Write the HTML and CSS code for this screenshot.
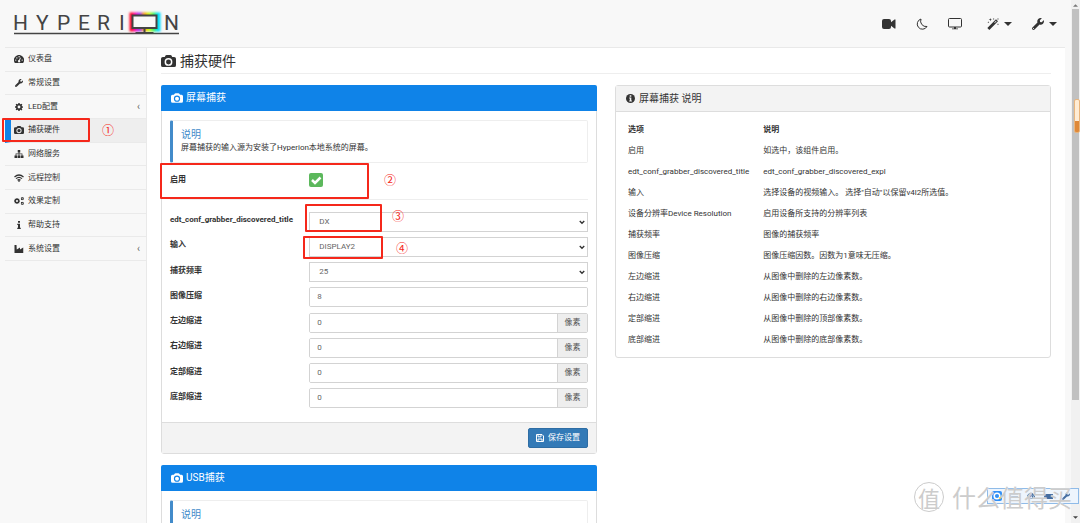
FILE: index.html
```html
<!DOCTYPE html>
<html lang="zh-CN">
<head>
<meta charset="utf-8">
<title>Hyperion</title>
<link rel="stylesheet" href="styles.css">
</head>
<body>
<svg class="defs" aria-hidden="true">
  <defs>
    <linearGradient id="rainbow"><stop offset="0" stop-color="#f02"/><stop offset=".12" stop-color="#f0a"/><stop offset=".3" stop-color="#83f"/><stop offset=".45" stop-color="#f80"/><stop offset=".65" stop-color="#cf0"/><stop offset=".85" stop-color="#2e6"/><stop offset="1" stop-color="#0df"/></linearGradient>
    <filter id="glow" x="-30%" y="-30%" width="160%" height="160%"><feGaussianBlur stdDeviation="1"/></filter>
  </defs>
  <symbol id="camera" viewBox="0 0 20 16"><path fill-rule="evenodd" d="M2.500 2.500H5L6 .8Q6.500 0 7.500 0h5Q13.500 0 14 .8l1 1.700h2.500Q20 2.500 20 5v8.500Q20 16 17.500 16h-15Q0 16 0 13.500V5Q0 2.500 2.500 2.500zM10 4a5.200 5.200 0 1 0 0 10.400A5.200 5.200 0 1 0 10 4zm0 1.900a3.300 3.300 0 1 1 0 6.600 3.300 3.300 0 1 1 0-6.600z"/></symbol>
  <symbol id="wrench" viewBox="0 0 512 512"><path d="M507.730 109.100c-2.240-9.030-13.540-12.090-20.120-5.510l-74.360 74.360-67.880-11.310-11.310-67.880 74.360-74.360c6.620-6.620 3.430-17.900-5.660-20.160-47.380-11.740-99.550.91-136.580 37.930-39.640 39.640-50.550 97.100-34.050 147.200L18.740 402.760c-24.990 24.990-24.990 65.510 0 90.500 24.990 24.990 65.510 24.990 90.500 0l213.210-213.210c50.120 16.710 107.470 5.680 147.370-34.220 37.070-37.070 49.700-89.320 37.910-136.730zM64 472c-13.250 0-24-10.750-24-24 0-13.260 10.750-24 24-24s24 10.740 24 24c0 13.250-10.750 24-24 24z"/></symbol>
  <symbol id="gauge" viewBox="0 0 18 14"><path fill-rule="evenodd" d="M1.500 14A9 9 0 1 1 16.500 14zM2 9a1.200 1.200 0 1 0 2.400 0A1.200 1.200 0 1 0 2 9zm2-4a1.200 1.200 0 1 0 2.400 0A1.200 1.200 0 1 0 4 5zm4-2a1.200 1.200 0 1 0 2.400 0A1.200 1.200 0 1 0 8 3zm5.500 6a1.200 1.200 0 1 0 2.400 0 1.200 1.200 0 1 0-2.400 0zM11 4.500 9 9a2 2 0 1 0 1.500.5l1.800-4.500z"/></symbol>
  <symbol id="gear" viewBox="0 0 16 16"><path fill-rule="evenodd" d="M6.700 0h2.600l.4 2.100 1.500.6L13 1.500 14.700 3.200l-1.300 1.700.6 1.500 2 .4v2.500l-2 .4-.6 1.500 1.300 1.800-1.800 1.800-1.800-1.300-1.400.6-.4 1.900H6.700l-.4-2-1.500-.6L3 14.700 1.300 13l1.300-1.800L2 9.700l-2-.4V6.700l2-.4.600-1.500L1.300 3 3 1.300l1.800 1.300L6.300 2zM8 5.200a2.800 2.800 0 1 0 0 5.600 2.800 2.800 0 1 0 0-5.600z"/></symbol>
  <symbol id="gears" viewBox="0 0 20 16"><svg x="0" y="2" width="12" height="12"><use href="#gear"/></svg><svg x="13" y="0" width="7" height="7"><use href="#gear"/></svg><svg x="13" y="9" width="7" height="7"><use href="#gear"/></svg></symbol>
  <symbol id="sitemap" viewBox="0 0 18 16"><path d="M6.500 0h5v5H9.800v2.200h6V11H18v5h-5.500v-5h1.800V8.700H9.800V11h1.700v5h-5v-5h1.700V8.700H3.700V11h1.800v5H0v-5h2.200V7.200h6V5H6.500z"/></symbol>
  <symbol id="wifi" viewBox="0 0 20 15"><g fill="none" stroke="currentColor" stroke-width="2.400"><path d="M1 5.500Q10-2.500 19 5.500M4 8.800q6-5.400 12 0M7 12q3-2.800 6 0"/></g><circle cx="10" cy="13.300" r="1.700"/></symbol>
  <symbol id="info" viewBox="0 0 8 16"><path d="M2 0h4v3.500H2zM.5 5.500H6v8h1.500V16h-7v-2.500H2V8H.5z"/></symbol>
  <symbol id="industry" viewBox="0 0 18 16"><path d="M0 0h4l.5 9L11 5v4l6.500-4v11H0z"/></symbol>
  <symbol id="wand" viewBox="0 0 18 18"><path fill-rule="evenodd" d="M13.500 2 16.500 5 3.500 18 .5 15zM13.500 4.200l-2.600 2.600.8.800 2.600-2.600z"/><path d="M5 0l.6 1.900 1.900.6-1.900.6L5 5l-.6-1.900-1.900-.6 1.900-.6zM10 0l.4 1.100 1.100.4-1.100.4L10 3l-.4-1.100-1.100-.4 1.100-.4zM16.500 8l.4 1.100 1.100.4-1.100.4-.4 1.100-.4-1.100-1.100-.4 1.100-.4zM16.500 0l.4 1.100 1.100.4-1.100.4-.4 1.100-.4-1.100-1.100-.4 1.100-.4zM2 5l.4 1.100 1.100.4-1.100.4L2 8l-.4-1.100L.5 6.500l1.100-.4z"/></symbol>
  <symbol id="chevron" viewBox="0 0 8 6"><path d="M1 1l3 3 3-3" fill="none" stroke="currentColor" stroke-width="1.800"/></symbol>
  <symbol id="caret" viewBox="0 0 8 4"><path d="M0 0h8L4 4z"/></symbol>
</svg>

<div class="app">
  <header class="topbar">
    <svg class="logo" viewBox="0 0 166 24" role="img" aria-label="Hyperion">
      <text class="logo-text" x="-1 22 43 64 83 105 150" y="18">HYPERIN</text>
      <path d="M0 21.500h165" stroke="#444" stroke-width="1.500"/>
      <rect x="118" y="3" width="26" height="14" fill="none" stroke="url(#rainbow)" stroke-width="5" filter="url(#glow)"/>
      <rect x="118.500" y="3.500" width="24" height="12.500" fill="#f8f8f8" stroke="#444" stroke-width="2"/>
      <path d="M129.500 16h2v4h8v1h-18v-1h8z" fill="#444"/>
    </svg>
    <nav class="tools">
      <button class="tool" aria-label="视频"><svg width="14" height="10" viewBox="0 0 14 10"><rect width="9" height="10" rx="2"/><path d="M8 4l4.500-3.500h1v9h-1L8 6z"/></svg></button>
      <button class="tool" aria-label="夜间模式"><svg width="12" height="12" viewBox="0 0 12 12"><path d="M5 1a5.200 5.200 0 1 0 6 7.500A5.500 5.500 0 0 1 5 1z" fill="none" stroke="currentColor"/></svg></button>
      <button class="tool" aria-label="显示器"><svg width="14" height="12" viewBox="0 0 14 12"><rect x=".5" y=".5" width="13" height="8.500" rx="1" fill="none" stroke="currentColor"/><path d="M6 9h2v1.500h2v.8H4v-.8h2z"/></svg></button>
      <button class="tool tool-menu first" aria-label="向导"><svg width="12" height="12"><use href="#wand"/></svg><svg width="8" height="4"><use href="#caret"/></svg></button>
      <button class="tool tool-menu" aria-label="设置"><svg width="12" height="12"><use href="#wrench"/></svg><svg width="8" height="4"><use href="#caret"/></svg></button>
    </nav>
  </header>

  <div class="body">
    <nav class="sidebar">
      <a href="#"><svg><use href="#gauge"/></svg>仪表盘</a>
      <a href="#"><svg><use href="#wrench"/></svg>常规设置</a>
      <a href="#"><svg><use href="#gear"/></svg>LED配置<span class="more">‹</span></a>
      <a href="#" class="active"><svg><use href="#camera"/></svg>捕获硬件</a>
      <a href="#"><svg><use href="#sitemap"/></svg>网络服务</a>
      <a href="#"><svg><use href="#wifi"/></svg>远程控制</a>
      <a href="#"><svg><use href="#gears"/></svg>效果定制</a>
      <a href="#"><svg><use href="#info"/></svg>帮助支持</a>
      <a href="#"><svg><use href="#industry"/></svg>系统设置<span class="more">‹</span></a>
    </nav>

    <main class="content">
      <h1><svg width="15" height="12"><use href="#camera"/></svg>捕获硬件</h1>
      <div class="columns">
        <div class="stack">
          <section class="panel">
            <h2 class="panel-head primary"><svg width="12" height="10"><use href="#camera"/></svg>屏幕捕获</h2>
            <form class="panel-body">
              <div class="callout"><h3>说明</h3><p>屏幕捕获的输入源为安装了Hyperion本地系统的屏幕。</p></div>
              <div class="row enable"><label for="enable">启用</label><input type="checkbox" id="enable" checked><svg class="tick" viewBox="0 0 14 14"><path d="M3 7l3 3 5.500-5.500" fill="none" stroke="#fff" stroke-width="2.500"/></svg></div>
              <div class="fields">
                <div class="row"><label for="dev">edt_conf_grabber_discovered_title</label><div class="select"><select id="dev"><option>DX</option></select><svg><use href="#chevron"/></svg></div></div>
                <div class="row"><label for="input">输入</label><div class="select"><select id="input"><option>DISPLAY2</option></select><svg><use href="#chevron"/></svg></div></div>
                <div class="row"><label for="fps">捕获频率</label><div class="select"><select id="fps"><option>25</option></select><svg><use href="#chevron"/></svg></div></div>
                <div class="row"><label for="dec">图像压缩</label><div class="group"><input type="text" id="dec" value="8"></div></div>
                <div class="row"><label for="left">左边缩进</label><div class="group"><input type="text" id="left" value="0"><span class="unit">像素</span></div></div>
                <div class="row"><label for="right">右边缩进</label><div class="group"><input type="text" id="right" value="0"><span class="unit">像素</span></div></div>
                <div class="row"><label for="top">定部缩进</label><div class="group"><input type="text" id="top" value="0"><span class="unit">像素</span></div></div>
                <div class="row"><label for="bottom">底部缩进</label><div class="group"><input type="text" id="bottom" value="0"><span class="unit">像素</span></div></div>
              </div>
            </form>
            <div class="panel-foot"><button class="save"><svg width="8" height="8" viewBox="0 0 8 8"><path d="M.5.5h5.500l1.500 1.500v5.500h-7zM2 .5v2.300h3V.5M2 7.500V5h4v2.500" fill="none" stroke="currentColor"/></svg>保存设置</button></div>
          </section>
          <section class="panel">
            <h2 class="panel-head primary"><svg width="12" height="10"><use href="#camera"/></svg>USB捕获</h2>
            <div class="panel-body"><div class="callout"><h3>说明</h3></div></div>
          </section>
        </div>

        <section class="panel">
          <h2 class="panel-head"><svg width="9" height="9" viewBox="0 0 9 9"><circle cx="4.500" cy="4.500" r="4.500"/><path d="M3.700 1.300h1.600v1.400H3.700zM3.200 3.500h2.100v3h.6v1H3.200v-1h.6v-2h-.6z" fill="#f3f3f3"/></svg><span>屏幕捕获 说明</span></h2>
          <div class="help">
            <table>
              <thead><tr><th class="name">选项</th><th>说明</th></tr></thead>
              <tbody>
                <tr><td>启用</td><td>如选中，该组件启用。</td></tr>
                <tr><td>edt_conf_grabber_discovered_title</td><td>edt_conf_grabber_discovered_expl</td></tr>
                <tr><td>输入</td><td>选择设备的视频输入。 选择"自动"以保留v4l2所选值。</td></tr>
                <tr><td>设备分辨率Device Resolution</td><td>启用设备所支持的分辨率列表</td></tr>
                <tr><td>捕获频率</td><td>图像的捕获频率</td></tr>
                <tr><td>图像压缩</td><td>图像压缩因数。因数为1意味无压缩。</td></tr>
                <tr><td>左边缩进</td><td>从图像中删除的左边像素数。</td></tr>
                <tr><td>右边缩进</td><td>从图像中删除的右边像素数。</td></tr>
                <tr><td>定部缩进</td><td>从图像中删除的顶部像素数。</td></tr>
                <tr><td>底部缩进</td><td>从图像中删除的底部像素数。</td></tr>
              </tbody>
            </table>
          </div>
        </section>
      </div>
    </main>
  </div>
</div>

<div class="scrollbar"><svg width="5" height="3" viewBox="0 0 8 4"><path d="M0 4h8L4 0z"/></svg><div class="thumb"></div><svg class="down" width="5" height="3"><use href="#caret"/></svg></div>
<div class="marker"></div>

<div class="mark mark-1"></div><span class="num num-1">①</span>
<div class="mark mark-2"></div><span class="num num-2">②</span>
<div class="mark mark-3"></div><span class="num num-3">③</span>
<div class="mark mark-4"></div><span class="num num-4">④</span>

<div class="ime"><svg width="10" height="10" viewBox="0 0 10 10"><rect width="10" height="10" rx="2" fill="#3290f5"/><circle cx="5" cy="5" r="2.800" fill="none" stroke="#fff" stroke-width="1.500"/><circle cx="8" cy="7" r="1" fill="#fc3"/></svg><svg width="8" height="8" viewBox="0 0 8 8"><path d="M0 2h7M0 5h7" stroke="#456da0"/></svg><svg width="8" height="8"><use href="#gauge"/></svg><svg width="10" height="8" viewBox="0 0 10 8"><path d="M0 2h9v5H0z"/></svg><svg width="8" height="8"><use href="#wrench"/></svg></div>
<div class="watermark"><span class="seal">值</span><span>什么值得买</span></div>
</body>
</html>
```

FILE: styles.css
```css
* { box-sizing: border-box; }
body {
  margin: 0;
  height: 100vh;
  overflow: hidden;
  position: relative;
  background: #f8f8f8;
  color: #333;
  font: 8px/12px Roboto, "Noto Sans CJK SC", sans-serif;
}
h1, h2, h3, p { margin: 0; font-weight: 400; }
button, input, select { font: inherit; color: inherit; }
svg { fill: currentColor; flex: none; }
.defs { position: absolute; width: 0; height: 0; }

.app { height: 100vh; display: flex; flex-direction: column; margin: 0 15px 0 5px; overflow: hidden; }
.topbar { flex: none; height: 48px; display: flex; align-items: center; justify-content: space-between; padding: 0 8px 0 9px; border-bottom: 1px solid #e9e9e9; }
.logo { width: 166px; height: 24px; overflow: visible; }
.logo-text { font: 400 21px Roboto, sans-serif; fill: #444; }
.tools { display: flex; align-items: center; gap: 20px; }
.tool { display: flex; align-items: center; gap: 5px; padding: 0; border: 0; background: none; }
.tool-menu.first { margin-left: 5px; }

.body { flex: 1; min-height: 0; display: flex; }
.sidebar { flex: none; width: 142px; height: 213px; display: grid; grid-auto-rows: 1fr; }
.sidebar a { display: flex; align-items: center; gap: 4px; padding: 0 9px; border-bottom: 1px solid #eaeaea; color: #333; text-decoration: none; }
.sidebar svg { width: 10px; height: 8px; }
.sidebar .active { background: #eee; border-left: 6px solid #0f83e8; padding-left: 3px; }
.more { margin-left: auto; margin-right: -2px; font-size: 10px; color: #666; }

.content { flex: 1; min-width: 0; padding: 0 14px; background: #fff; border-left: 1px solid #e9e9e9; margin-left: -1px; }
h1 { display: flex; align-items: center; gap: 4px; height: 26px; border-bottom: 1px solid #eee; font-size: 14px; line-height: 20px; }
.columns { display: grid; grid-template-columns: 1fr 1fr; align-items: start; gap: 18px; margin-top: 11px; }
.stack { display: grid; gap: 11px; }
.panel { border: 1px solid #ddd; border-radius: 3px; background: #fff; }
.panel-head { display: flex; align-items: center; gap: 4px; height: 26px; padding: 0 10px; background: #f3f3f3; border-bottom: 1px solid #ddd; font-size: 10px; }
.panel-head.primary { gap: 3px; margin: -1px -1px 0; background: #0f83e8; color: #fff; border: 0; border-radius: 2px 2px 0 0; }
.panel-body { padding: 9px 8px 11px; }
.callout { height: 43px; padding: 7px 8px; border: 1px solid #eee; border-left: 3px solid #428bca; border-radius: 2px; }
.callout h3 { font-size: 10px; line-height: 13px; color: #428bca; }
.callout p { line-height: 14px; }
.row { display: grid; grid-template-columns: 1fr 2fr; align-items: center; }
.row label { font-weight: 700; }
.enable { height: 37px; border-bottom: 1px solid #eee; }
.enable label { padding-bottom: 2px; }
.enable input { grid-area: 1 / 2; appearance: none; margin: 0 0 2px; width: 14px; height: 14px; background: #5cb85c; border-radius: 2px; }
.tick { grid-area: 1 / 2; width: 14px; height: 14px; margin-bottom: 2px; pointer-events: none; }
.fields { display: grid; grid-auto-rows: 1fr; height: 202px; margin-top: 9px; }
.fields label { padding-bottom: 3px; }
.select, .group { display: flex; position: relative; height: 20px; border: 1px solid #d3d3d3; border-radius: 2px; overflow: hidden; }
.select { border-radius: 0; }
.select select { appearance: none; width: 100%; border: 0; background: #fff; padding: 0 9px; color: #666; }
.select svg { position: absolute; right: 2px; top: 7px; width: 6px; height: 5px; pointer-events: none; }
.group input { flex: 1; min-width: 0; border: 0; padding: 0 7px; color: #666; }
.unit { width: 30px; text-align: center; line-height: 18px; background: #eee; border-left: 1px solid #d3d3d3; color: #555; }
.panel-foot { display: flex; justify-content: flex-end; padding: 5px 8px; background: #f3f3f3; border-top: 1px solid #ddd; }
.save { display: flex; align-items: center; justify-content: center; gap: 4px; width: 60px; height: 20px; padding: 0; border: 1px solid #2e6da4; border-radius: 2px; background: #337ab7; color: #fff; }

.help { padding: 7px 12px; }
table { width: 100%; border-collapse: collapse; }
th, td { height: 21px; padding: 0; text-align: left; }
.name { width: 33%; }
td { white-space: nowrap; }

.scrollbar { position: absolute; right: 0; top: 0; bottom: 0; width: 9px; display: flex; flex-direction: column; align-items: center; padding: 4px 0; background: #f1f1f1; color: #777; }
.thumb { width: 7px; height: 76%; margin-top: 2px; background: #c1c1c1; }
.down { margin-top: auto; color: #444; }
.marker { position: absolute; right: 0; top: 99px; width: 6px; height: 34px; border: 1px solid #e9b57d; border-radius: 2px; background: linear-gradient(#ffecd4 66%, #df8939 66%); }

.mark { position: absolute; border: 2px solid #f5281b; border-radius: 1px; }
.mark-1 { left: 2px; top: 118px; width: 88px; height: 24px; }
.mark-2 { left: 160px; top: 163px; width: 209px; height: 36px; }
.mark-3 { left: 305px; top: 204px; width: 77px; height: 28px; }
.mark-4 { left: 303px; top: 236px; width: 80px; height: 23px; }
.num { position: absolute; font: 12px/14px "Noto Sans CJK SC", sans-serif; color: #f5281b; }
.num-1 { left: 102px; top: 123px; }
.num-2 { left: 384px; top: 173px; }
.num-3 { left: 392px; top: 209px; }
.num-4 { left: 396px; top: 241px; }

.ime { position: absolute; right: 1px; bottom: 19px; width: 92px; height: 16px; display: flex; align-items: center; justify-content: space-between; padding: 0 8px 0 4px; border: 1px solid #8fbbe8; background: #eef5fd; color: #456da0; }
.watermark { position: absolute; right: 8px; bottom: 10px; display: flex; align-items: center; gap: 8px; font: 24px/32px "Noto Sans CJK SC", sans-serif; color: #ccc; text-shadow: 0 0 1px #fff; }
.seal { width: 30px; height: 30px; border: 1px solid #ccc; border-radius: 50%; font-size: 22px; line-height: 28px; text-align: center; }
```
